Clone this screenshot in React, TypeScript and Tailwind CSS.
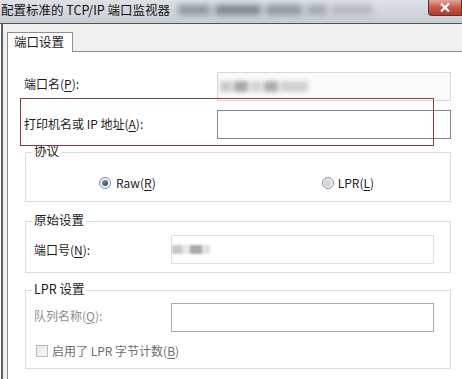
import React from "react";

const font = { fontFamily: '"Noto Sans CJK SC", "Noto Sans", sans-serif' };

function U({ c }: { c: string }) {
  return <span className="underline underline-offset-2">{c}</span>;
}

function Radio({ checked }: { checked?: boolean }) {
  return (
    <span className="flex h-[12px] w-[12px] items-center justify-center rounded-full border border-[#8a8f96] bg-gradient-to-br from-[#e4e6e9] to-[#f8f9fa]">
      {checked ? (
        <span className="h-[6px] w-[6px] rounded-full bg-gradient-to-br from-[#7fa3c7] to-[#1f3f66]" />
      ) : (
        <span className="h-[7px] w-[7px] rounded-full bg-[#d4d7da]" />
      )}
    </span>
  );
}

export default function App() {
  return (
    <div
      className="relative h-[379px] w-[462px] overflow-hidden bg-white text-[12px] leading-none text-[#1c1c1c]"
      style={font}
    >
      {/* Title bar */}
      <div className="flex h-[24px] items-start border-b border-[#4f5358] bg-gradient-to-b from-[#dde1e5] via-[#d2d7dc] to-[#c7cdd3]">
        <div className="pl-[1px] pt-[4px] text-[12.5px] text-[#111]">配置标准的 TCP/IP 端口监视器</div>
        <div className="ml-[8px] mt-[4px] flex h-[12px] w-[220px] items-center gap-[5px] blur-[3px]">
          <span className="h-[10px] w-[32px] bg-[#8f959b]" />
          <span className="h-[10px] w-[46px] bg-[#80868c]" />
          <span className="h-[10px] w-[36px] bg-[#8e949a]" />
          <span className="h-[10px] w-[20px] bg-[#a2a8ad]" />
          <span className="h-[10px] w-[40px] bg-[#b3b8bd]" />
        </div>
        <div className="ml-auto flex h-[16px] w-[34px] items-center justify-center rounded-bl-[4px] border border-t-0 border-[#6a2a24] bg-gradient-to-b from-[#e0a49a] via-[#c9584a] to-[#b4382a]">
          <svg width="10" height="9" viewBox="0 0 10 9">
            <path d="M1 0.5 L9 8.5 M9 0.5 L1 8.5" stroke="white" strokeWidth="2.2" />
          </svg>
        </div>
      </div>

      {/* Body */}
      <div className="ml-[1px] h-full border-l-2 border-[#5c6066] bg-[#f0f0f0]">
        {/* Tab strip */}
        <div className="flex h-[27px] items-end pl-[4px]">
          <div className="relative -mb-[1px] flex h-[20px] w-[66px] items-center border border-b-0 border-[#8e8f8f] bg-white pl-[6px] text-[12.5px]">
            端口设置
          </div>
        </div>

        {/* Panel */}
        <div className="ml-[4px] h-full border-l border-t border-[#8e8f8f] bg-white">
          {/* Port name row */}
          <div className="mt-[20px] flex h-[29px] items-center pl-[16px]">
            <div className="w-[193px] pb-[6px]">
              端口名(<U c="P" />):
            </div>
            <div className="flex h-[29px] w-[234px] items-center border border-[#d6d9dc] bg-[#fafafa] pl-[2px]">
              <div className="flex items-center gap-[2px] blur-[2px]">
                <span className="h-[11px] w-[12px] bg-[#cbcbcb]" />
                <span className="h-[11px] w-[14px] bg-[#a8a8a8]" />
                <span className="h-[11px] w-[12px] bg-[#d4d4d4]" />
                <span className="h-[11px] w-[14px] bg-[#acacac]" />
                <span className="h-[11px] w-[28px] bg-[#d2d2d2]" />
              </div>
            </div>
          </div>

          {/* Printer name row */}
          <div className="mt-[9px] flex h-[29px] items-center pl-[16px]">
            <div className="w-[193px] pb-[2px]">
              打印机名或 IP 地址(<U c="A" />):
            </div>
            <div className="h-[29px] w-[234px] border border-[#7b8894] bg-white" />
          </div>

          {/* Protocol group */}
          <div className="relative ml-[17px] mt-[13px] flex h-[50px] w-[426px] items-end border border-[#d8dde2] pb-[12px]">
            <span className="absolute -top-[8px] left-[6px] bg-white px-[2px] text-[12.5px]">协议</span>
            <div className="ml-[73px] flex items-center gap-[5px]">
              <Radio checked />
              <span>
                Raw(<U c="R" />)
              </span>
            </div>
            <div className="ml-[166px] flex items-center gap-[4px]">
              <Radio />
              <span>
                LPR(<U c="L" />)
              </span>
            </div>
          </div>

          {/* Raw settings group */}
          <div className="relative ml-[17px] mt-[19px] h-[52px] w-[426px] border border-[#d8dde2] pl-[8px] pt-[13px]">
            <span className="absolute -top-[8px] left-[6px] bg-white px-[2px] text-[12.5px]">原始设置</span>
            <div className="flex h-[29px] items-center">
              <div className="w-[137px]">
                端口号(<U c="N" />):
              </div>
              <div className="flex h-[29px] w-[263px] items-center border border-[#dde0e3] bg-white">
                <div className="flex items-center blur-[1px]">
                  <span className="h-[9px] w-[10px] bg-[#c8c8c8]" />
                  <span className="h-[9px] w-[8px] bg-[#e6e6e6]" />
                  <span className="h-[9px] w-[12px] bg-[#aaaaaa]" />
                  <span className="h-[9px] w-[8px] bg-[#e0e0e0]" />
                </div>
              </div>
            </div>
          </div>

          {/* LPR settings group */}
          <div className="relative ml-[17px] mt-[17px] h-[79px] w-[426px] border border-[#d8dde2] pl-[8px] pt-[12px]">
            <span className="absolute -top-[8px] left-[6px] bg-white px-[2px] text-[12.5px]">LPR 设置</span>
            <div className="flex h-[29px] items-center text-[#8d8d8d]">
              <div className="w-[137px] pb-[4px]">
                队列名称(<U c="Q" />):
              </div>
              <div className="h-[29px] w-[263px] border border-[#a9acb0] bg-white" />
            </div>
            <div className="mt-[13px] flex items-center gap-[4px] pl-[2px] text-[#6e6e6e]">
              <span className="h-[12px] w-[12px] border border-[#b8bcc0] bg-gradient-to-br from-[#e6e8ea] to-[#f7f8f9]" />
              <span>
                启用了 LPR 字节计数(<U c="B" />)
              </span>
            </div>
          </div>
        </div>
      </div>

      {/* Red highlight annotation */}
      <div className="pointer-events-none absolute left-[20px] top-[98px] h-[48px] w-[414px] border border-[#8c3c3c]" />
    </div>
  );
}
